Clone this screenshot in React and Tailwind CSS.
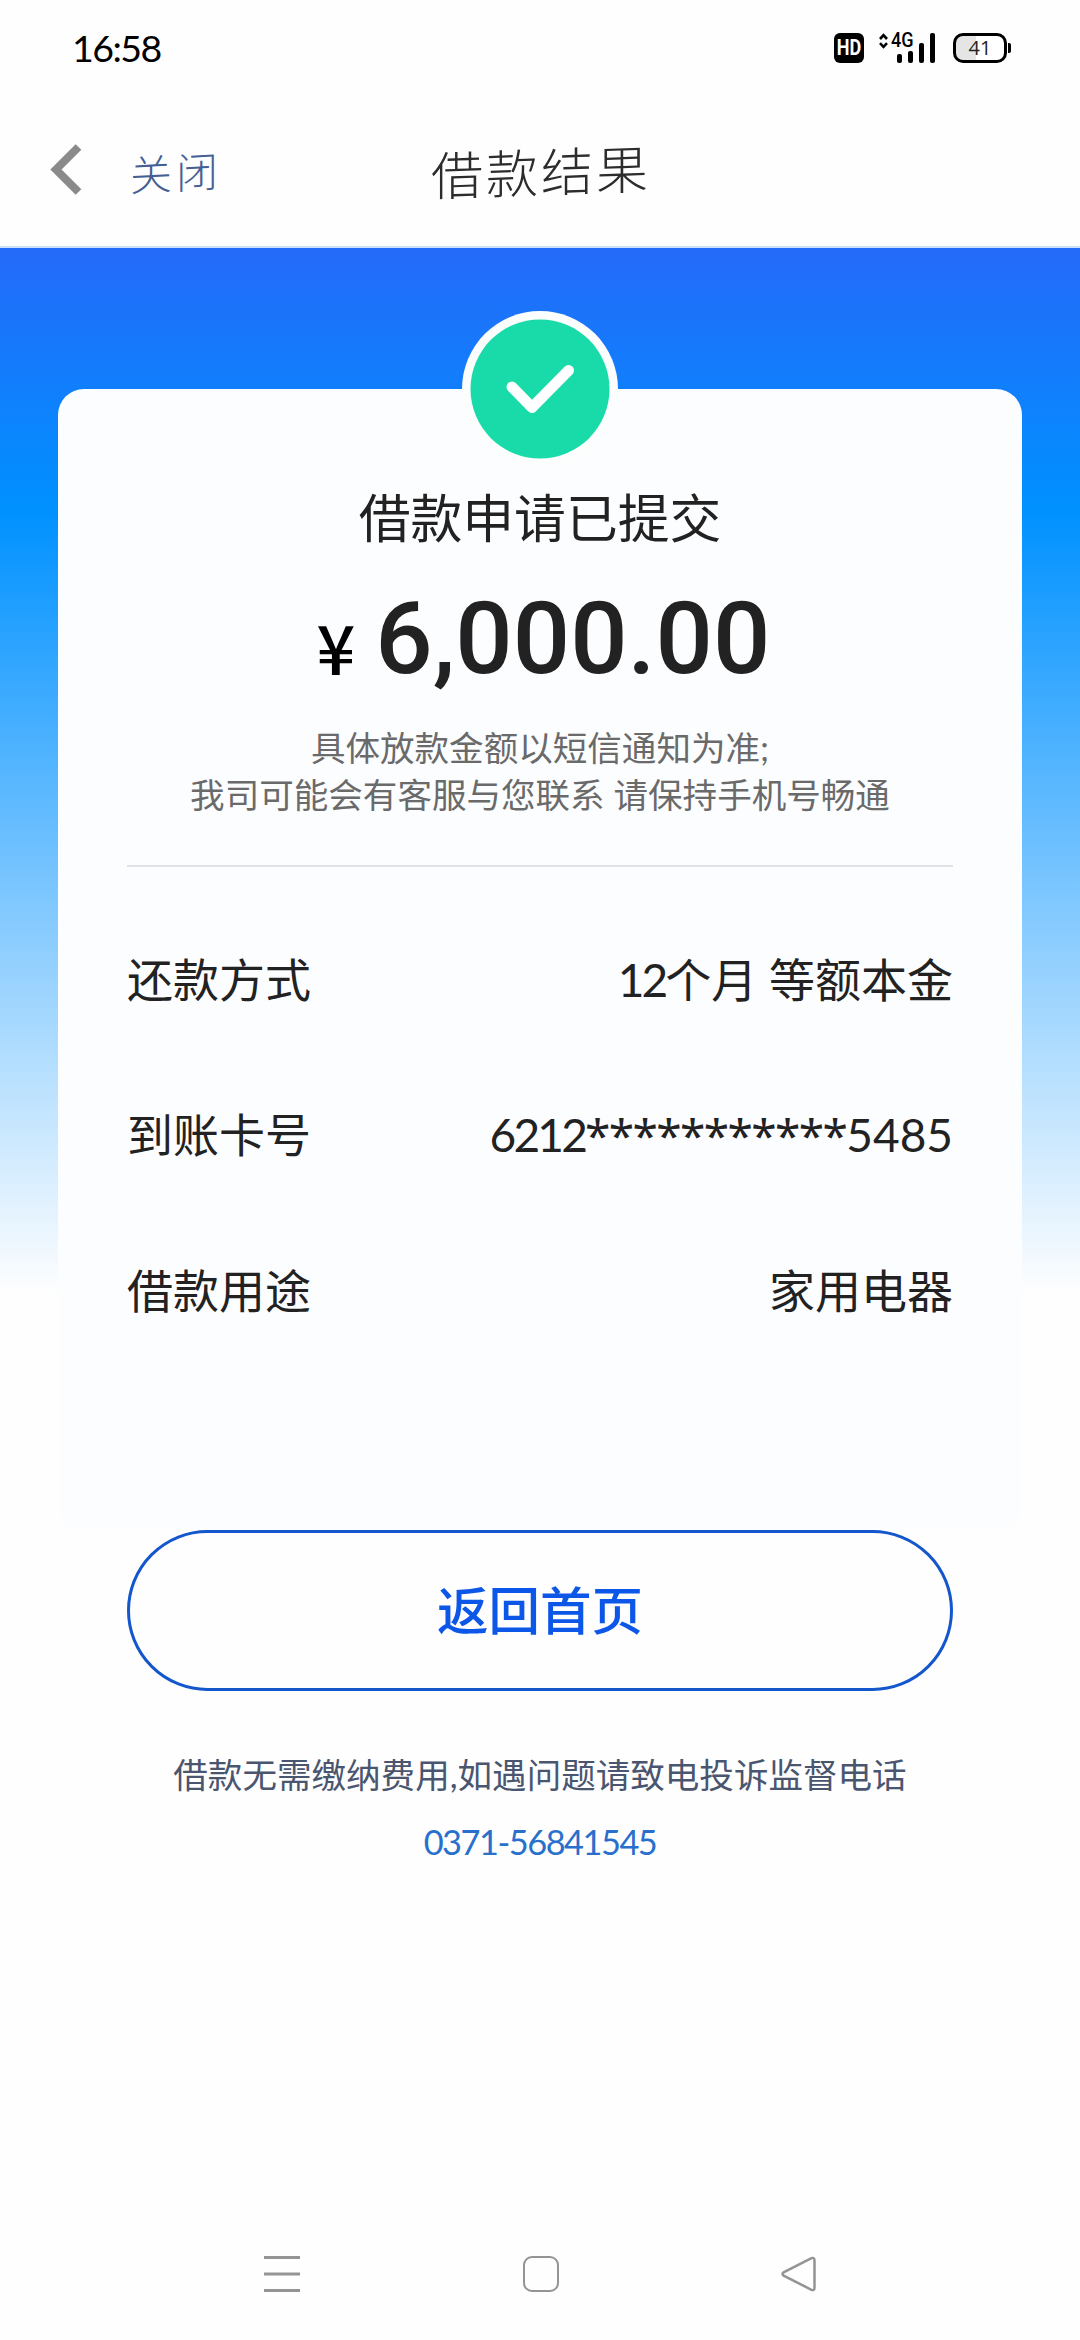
const cjk = "font-['Lato','Noto_Sans_CJK_SC',sans-serif]";

function StatusBar() {
  return (
    <div className="flex h-[96px] items-center justify-between pl-[72px] pr-[69px]">
      <span className="font-['Lato',sans-serif] text-[37.5px] leading-none tracking-[-1.5px] text-black">16:58</span>
      <div className="flex h-[30px] items-center">
        <div className="mr-[15px] flex size-[30px] items-center justify-center rounded-[6px] bg-black">
          <span className="scale-x-[0.82] font-['Roboto',sans-serif] text-[22px] font-bold leading-none text-white">HD</span>
        </div>
        <div className="relative h-[30px] w-[56px]">
          <svg className="h-[30px] w-[56px]" viewBox="0 0 56 30" aria-hidden="true">
            <path d="M1 6 4.500 2.200 8 6M1 10.200 4.500 13.800 8 10.200" fill="none" stroke="#000" strokeWidth="2.600" />
            <rect x="18" y="21" width="5" height="9" rx="2" />
            <rect x="29" y="18" width="5" height="12" rx="2" />
            <rect x="40" y="10" width="5" height="20" rx="2" />
            <rect x="51" y="0" width="5" height="30" rx="2" />
          </svg>
          <span className="absolute -top-[3px] left-[12px] origin-left scale-x-[0.88] font-['Roboto',sans-serif] text-[20.5px] font-medium leading-[21px] text-black">4G</span>
        </div>
        <div className="ml-[18px] flex h-[30px] w-[54px] items-center justify-center rounded-[10px] border-[3px] border-black bg-linear-to-r from-[#e5e5e5] from-42% to-white to-42%">
          <span className="font-['Open_Sans','Noto_Sans',sans-serif] text-[20px] leading-none text-[#222]">41</span>
        </div>
        <div className="ml-px h-[10px] w-[3px] rounded-r-[2px] bg-black" />
      </div>
    </div>
  );
}

function Header() {
  return (
    <header className="grid h-[152px] grid-cols-[1fr_auto_1fr] items-center border-b-2 border-[#cddffb] pb-[2px]">
      <div className="flex items-center pl-[50px]">
        <svg className="h-[52px] w-[32px]" viewBox="0 0 32 52" aria-hidden="true">
          <path d="M28.500 3 6 25.500 28.500 48" fill="none" stroke="#8a8a8a" strokeWidth="8" />
        </svg>
        <span className="ml-[48px] mt-[1px] -skew-y-3 font-['Noto_Sans_CJK_SC',sans-serif] text-[42px] font-light leading-none tracking-[4px] text-[#455f94]">关闭</span>
      </div>
      <h1 className="-skew-y-2 pl-[2px] font-['Noto_Sans_CJK_SC',sans-serif] text-[52px] font-light leading-none tracking-[3px] text-[#2c2c2c]">借款结果</h1>
      <span />
    </header>
  );
}

function Row({ label, children }) {
  return (
    <div className="flex h-[155.500px] items-center justify-between text-[46px] leading-none text-[#222]">
      <span>{label}</span>
      <span className="flex">{children}</span>
    </div>
  );
}

function SuccessBadge() {
  return (
    <svg className="absolute -top-[78px] left-1/2 size-[156px] -translate-x-1/2" viewBox="0 0 156 156" aria-hidden="true">
      <circle cx="78" cy="78" r="78" fill="#fcfefe" />
      <circle cx="78" cy="78" r="69.500" fill="#18dba9" />
      <path d="M50 76 70 96.500 106.500 59.500" fill="none" stroke="#fff" strokeWidth="11" strokeLinecap="round" strokeLinejoin="round" />
    </svg>
  );
}

function ResultCard() {
  return (
    <section className="relative mx-[58px] h-[1141px] rounded-[26px] bg-[#fcfdff] px-[69px] pt-[101px]">
      <SuccessBadge />
      <h2 className="text-center text-[51.800px] leading-[56px] text-[#222]">借款申请已提交</h2>
      <div className="mt-[43px] flex h-[100px] items-baseline justify-center whitespace-nowrap pl-[7px] font-['Roboto',sans-serif] leading-[100px]">
        <span className="relative top-[2px] mr-[20px] font-['Noto_Sans_CJK_SC',sans-serif] text-[68px] font-medium leading-none text-black">¥</span>
        <span className="text-[101px] font-medium text-[#222]">6,000.00</span>
      </div>
      <p className="mt-[35px] text-center text-[34.560px] leading-[47px] text-[#6a6a6a]">
        具体放款金额以短信通知为准;
        <br />
        我司可能会有客服与您联系 请保持手机号畅通
      </p>
      <hr className="mt-[47px] border-t-2 border-[#e0e3e8]" />
      <div className="mt-[35px]">
        <Row label="还款方式">
          <span className="tracking-[-3px]">12</span>
          <span>个月&nbsp;等额本金</span>
        </Row>
        <Row label="到账卡号">
          <span className="tracking-[-2.800px]">6212</span>
          <span className="font-['Noto_Sans',sans-serif] tracking-[-1.600px]">***********</span>
          <span>5485</span>
        </Row>
        <Row label="借款用途">家用电器</Row>
      </div>
    </section>
  );
}

function NavBar() {
  return (
    <nav className="flex h-[132px] items-center justify-between px-[263px]">
      <svg className="h-[36px] w-[38px]" viewBox="0 0 38 36" aria-hidden="true">
        <path d="M1 1.500H37M1 18H37M1 34.500H37" stroke="#949494" strokeWidth="3" />
      </svg>
      <div className="size-[36px] rounded-[9px] border-[2.500px] border-[#949494]" />
      <svg className="h-[36px] w-[36px]" viewBox="0 0 36 36" aria-hidden="true">
        <path d="M30.500 2.200 2.600 16.300Q.4 18 2.600 19.700L30.500 33.800Q33.500 35 33.500 31.500V4.500Q33.500 1 30.500 2.200Z" fill="none" stroke="#949494" strokeWidth="2.500" />
      </svg>
    </nav>
  );
}

export default function App() {
  return (
    <div className={`flex h-[2340px] w-[1080px] flex-col bg-[#fefefe] ${cjk}`}>
      <StatusBar />
      <Header />
      <main className="flex-1 bg-[linear-gradient(to_bottom,#246af9_0px,#0091ff_262px,#fefefe_1045px)] pt-[141px]">
        <ResultCard />
        <button className="mx-auto flex h-[161px] w-[826px] items-center justify-center rounded-full border-3 border-[#1456cc] bg-[#fefefe] text-[51.500px] font-medium leading-none text-[#0c56e8]">
          返回首页
        </button>
        <p className="mt-[60px] text-center text-[34.560px] leading-[47px] text-[#4a566f]">借款无需缴纳费用,如遇问题请致电投诉监督电话</p>
        <p className="mt-[20px] text-center text-[34.400px] leading-[47px] tracking-[-1.500px] text-[#2870cc]">0371-56841545</p>
      </main>
      <NavBar />
    </div>
  );
}
